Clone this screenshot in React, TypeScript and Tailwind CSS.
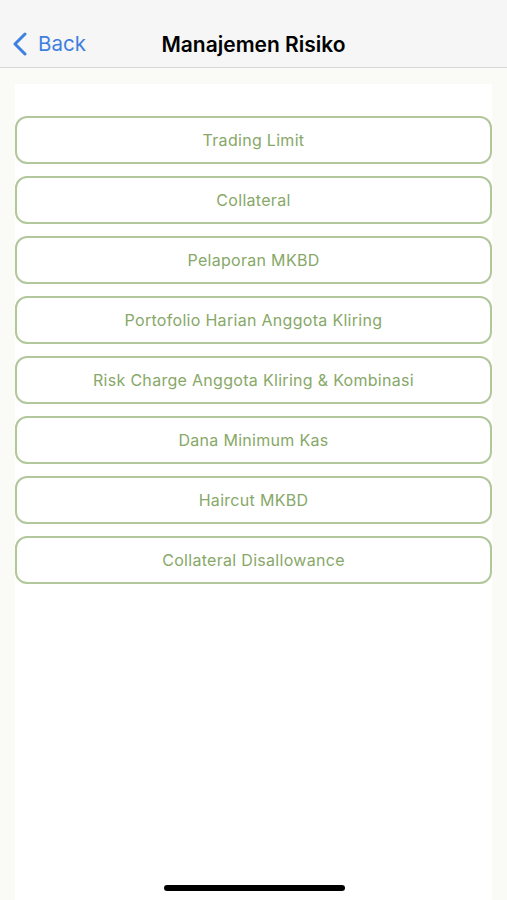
const items = [
  'Trading Limit',
  'Collateral',
  'Pelaporan MKBD',
  'Portofolio Harian Anggota Kliring',
  'Risk Charge Anggota Kliring & Kombinasi',
  'Dana Minimum Kas',
  'Haircut MKBD',
  'Collateral Disallowance',
]

export default function App() {
  return (
    <div
      className="relative w-[507px] h-[900px] overflow-hidden bg-[#fafbf6] flex flex-col"
      style={{ fontFamily: 'Inter, "Noto Sans", sans-serif' }}
    >
      {/* nav bar */}
      <div className="h-[68px] shrink-0 bg-[#f6f6f6] border-b border-[#d9d9d9] relative flex items-end pb-[12px]">
        <button className="absolute left-[12px] bottom-[11px] flex items-center gap-[10px] text-[#3f7fe0]">
          <svg width="16" height="24" viewBox="0 0 16 24" fill="none">
            <path d="M13 2 L3 12 L13 22" stroke="currentColor" strokeWidth="3" strokeLinecap="round" strokeLinejoin="round" />
          </svg>
          <span className="text-[20.5px] leading-none">Back</span>
        </button>
        <div className="w-full text-center text-[21px] font-semibold text-black leading-none">
          Manajemen Risiko
        </div>
      </div>

      {/* content */}
      <div className="flex-1 pt-[16px] px-[15px]">
        <div className="h-full bg-white pt-[32px] flex flex-col gap-[12px]">
          {items.map((label) => (
            <button
              key={label}
              className="h-[48px] w-full rounded-[12px] border-[2px] border-[#b2c79a] text-[16px] text-[#87a868] tracking-[0.3px] flex items-center justify-center"
            >
              {label}
            </button>
          ))}
        </div>
      </div>

      {/* home indicator */}
      <div className="absolute bottom-[9px] left-[164px] w-[181px] h-[6px] rounded-full bg-black" />
    </div>
  )
}
